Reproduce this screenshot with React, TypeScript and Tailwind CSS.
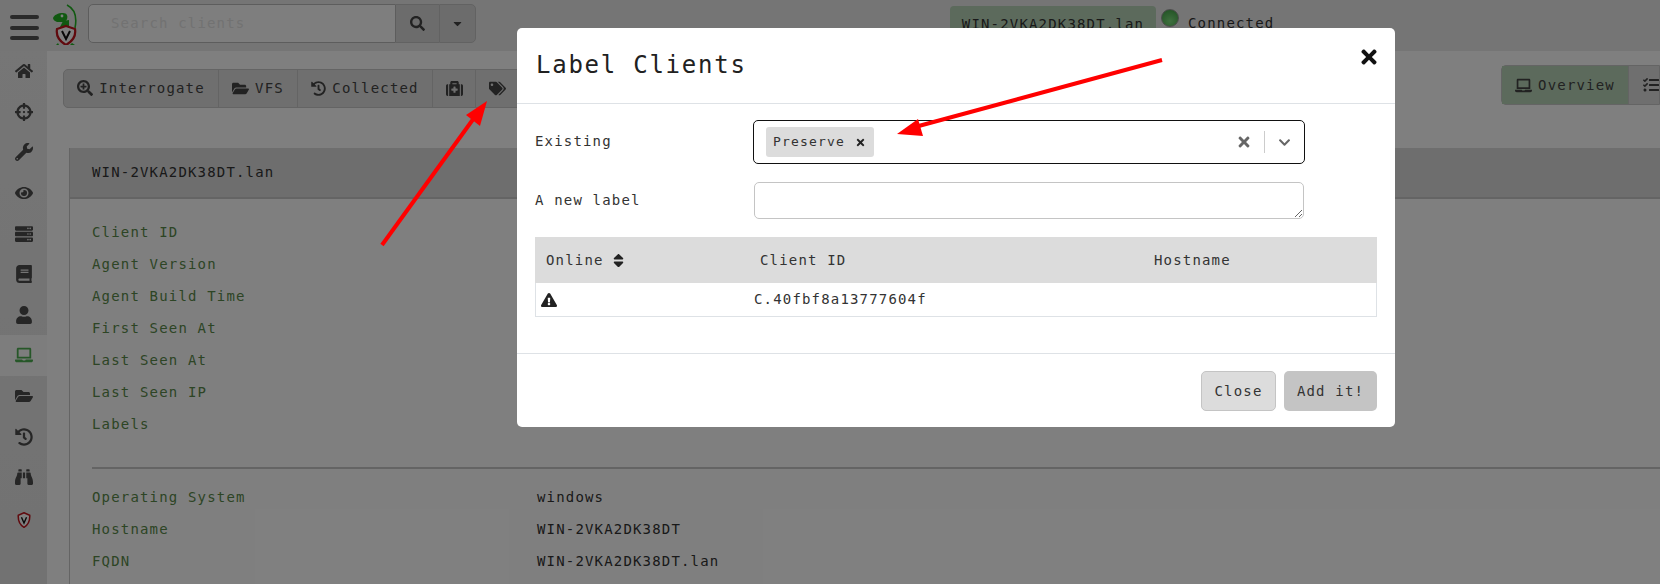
import {
  FaBinoculars,
  FaBook,
  FaCaretDown,
  FaChevronDown,
  FaCrosshairs,
  FaExclamationTriangle,
  FaEye,
  FaFolderOpen,
  FaHistory,
  FaHome,
  FaLaptop,
  FaMedkit,
  FaSearch,
  FaSearchPlus,
  FaServer,
  FaSort,
  FaTags,
  FaTasks,
  FaTimes,
  FaUser,
  FaWrench,
} from "react-icons/fa";

function Shield({ size = 22 }: { size?: number }) {
  return (
    <svg width={size} height={size * 1.15} viewBox="0 0 22 25">
      <path d="M11 1 L20 5 C20.5 13 18 20 11 24 C4 20 1.5 13 2 5 Z" fill="#fff" stroke="#c0141c" strokeWidth="2.4" />
      <path d="M7 8 L11 17 L15 8" fill="none" stroke="#111" strokeWidth="2.2" />
    </svg>
  );
}

function Logo() {
  return (
    <svg width="27" height="41" viewBox="0 0 27 41" className="shrink-0">
      <path d="M15 1 C23 5 25 14 23 24" fill="none" stroke="#22b322" strokeWidth="1.6" />
      <path d="M1 14 C2 11 6 9 11 9 C15 9 16 12 15 15 C14 18 11 18 9 18 L5 18 C3 17 1 16 1 14 Z" fill="#22b322" />
      <path d="M11 17 L17 16 L17 23 L8 23 Z" fill="#22b322" />
      <circle cx="10" cy="12" r="1.4" fill="#fff" />
      <path d="M2 43 L6 39 L8 43 Z M20 39 L26 43 L16 43 Z" fill="#22b322" />
      <path d="M14 22 L23 25 C24 31 21 37 14 41 C7 37 4 31 5 25 Z" fill="#fff" stroke="#c0141c" strokeWidth="2.2" />
      <path d="M10 27 L14 35 L18 27" fill="none" stroke="#111" strokeWidth="2" />
    </svg>
  );
}

const navIcons = [
  FaHome,
  FaCrosshairs,
  FaWrench,
  FaEye,
  FaServer,
  FaBook,
  FaUser,
  FaLaptop,
  FaFolderOpen,
  FaHistory,
  FaBinoculars,
];

const detailLabels = ["Client ID", "Agent Version", "Agent Build Time", "First Seen At", "Last Seen At", "Last Seen IP", "Labels"];

const systemRows = [
  ["Operating System", "windows"],
  ["Hostname", "WIN-2VKA2DK38DT"],
  ["FQDN", "WIN-2VKA2DK38DT.lan"],
];

function TopBar() {
  return (
    <div className="flex h-[51px] shrink-0 items-start bg-[#eaeaea]">
      <div className="ml-[10px] mt-[15px] flex w-[29px] flex-col gap-[6.5px]">
        <div className="h-[4px] rounded-full bg-[#555]" />
        <div className="h-[4px] rounded-full bg-[#555]" />
        <div className="h-[4px] rounded-full bg-[#555]" />
      </div>
      <div className="ml-[13px] mt-[4px]">
        <Logo />
      </div>
      <div className="ml-[9px] mt-[4px] flex h-[39px] w-[388px]">
        <div className="flex w-[308px] items-center rounded-l-[5px] border border-[#bbb] bg-[#fdfdfd] pl-[22px] text-[#e4e4e4]">
          Search clients
        </div>
        <div className="flex w-[43px] items-center justify-center border-y border-[#c4c4c4] bg-[#d8d8d8] text-[#444]">
          <FaSearch size={15} />
        </div>
        <div className="flex w-[37px] items-center justify-center rounded-r-[5px] border border-[#c4c4c4] bg-[#d8d8d8] text-[#444]">
          <FaCaretDown size={13} />
        </div>
      </div>
      <div className="ml-[474px] mt-[6px] flex h-[36px] w-[206px] items-center justify-center rounded-[4px] bg-[#b8d4b8] text-[#333]">
        WIN-2VKA2DK38DT.lan
      </div>
      <div className="ml-[5px] mt-[9px] h-[18px] w-[18px] rounded-full border border-[#999] bg-[radial-gradient(circle_at_50%_70%,#7ee07e,#3f9f45)]" />
      <div className="ml-[9px] mt-[13px] text-[#333]">Connected</div>
    </div>
  );
}

function Sidebar() {
  return (
    <div className="h-full w-[47px] shrink-0 bg-gradient-to-b from-[#ececec] to-[#e4e4e4]">
      {navIcons.map((Icon, i) => (
        <div
          key={i}
          className={
            i === 7
              ? "flex h-[40.6px] items-center justify-center bg-[#fafafa] text-[#4caf50]"
              : "flex h-[40.6px] items-center justify-center text-[#4c4c4c]"
          }
        >
          <Icon size={18} />
        </div>
      ))}
      <div className="mt-[2px] flex h-[41px] items-center justify-center">
        <Shield size={14} />
      </div>
    </div>
  );
}

function ToolButton({ icon, label, className }: { icon: React.ReactNode; label?: string; className: string }) {
  return (
    <div className={`flex h-full items-center gap-[6px] border-r border-[#c8c8c8] pb-[1px] text-[#444] ${className}`}>
      {icon}
      {label && <span>{label}</span>}
    </div>
  );
}

function Toolbar() {
  return (
    <div className="mt-[18px] ml-[16px] flex h-[39px] items-start justify-between">
      <div className="flex h-full rounded-[5px] border border-[#c8c8c8] bg-[#dedede]">
        <ToolButton className="w-[155px] justify-center" icon={<FaSearchPlus size={16} />} label="Interrogate" />
        <ToolButton className="w-[79px] justify-center" icon={<FaFolderOpen size={17} />} label="VFS" />
        <ToolButton className="w-[135px] justify-center" icon={<FaHistory size={15} />} label="Collected" />
        <ToolButton className="w-[43px] justify-center" icon={<FaMedkit size={17} />} />
        <ToolButton className="w-[60px] pl-[13px]" icon={<FaTags size={17} />} />
      </div>
      <div className="-mt-[4px] flex h-[40px] w-[159px] rounded-l-[5px] border border-[#c8c8c8] bg-[#dedede]">
        <div className="flex w-[129px] items-center justify-center gap-[6px] border-r border-[#c8c8c8] bg-[#b8d4b8] text-[#444]">
          <FaLaptop size={17} />
          <span>Overview</span>
        </div>
        <div className="flex flex-1 items-center pl-[14px] text-[#444]">
          <FaTasks size={16} />
        </div>
      </div>
    </div>
  );
}

function ClientPanel() {
  return (
    <div className="mt-[40px] ml-[22px] h-[600px] border-l border-[#c8c8c8]">
      <div className="flex h-[51px] items-center border-b-2 border-[#c8c8c8] bg-[#dcdcdc] pl-[22px] pb-[1px] text-[#333]">
        WIN-2VKA2DK38DT.lan
      </div>
      <div className="pl-[22px] pt-[17px]">
        {detailLabels.map((label) => (
          <div key={label} className="flex h-[32px] items-center text-[#5a8a4a]">
            {label}
          </div>
        ))}
        <div className="mb-[12px] mt-[27px] h-[2px] bg-[#c8c8c8]" />
        {systemRows.map(([label, value]) => (
          <div key={label} className="flex h-[32px] items-center">
            <div className="w-[445px] text-[#5a8a4a]">{label}</div>
            <div className="text-[#333]">{value}</div>
          </div>
        ))}
      </div>
    </div>
  );
}

function LabelModal() {
  return (
    <div className="absolute left-[517px] top-[28px] w-[878px] rounded-[5px] bg-white text-[#333]">
      <div className="relative flex h-[76px] items-center border-b border-[#dee2e6] pl-[19px] pb-[2px] text-[24px] tracking-[1.75px] text-[#212121]">
        Label Clients
        <FaTimes size={22} className="absolute right-[15px] top-[18px] text-[#111]" />
      </div>
      <div className="px-[18px] pt-[16px]">
        <div className="flex items-center">
          <div className="w-[218px] pb-[1px]">Existing</div>
          <div className="flex h-[44px] w-[552px] items-center rounded-[5px] border-[1.4px] border-[#111] pl-[12px]">
            <div className="flex h-[30px] w-[108px] items-center rounded-[3px] bg-[#dcdcdc] pl-[7px] text-[13px]">
              Preserve
              <FaTimes size={11} className="ml-[10px] text-[#222]" />
            </div>
            <FaTimes size={16} className="ml-auto text-[#666]" />
            <div className="ml-[12px] h-[22px] w-px bg-[#ccc]" />
            <FaChevronDown size={13} className="ml-[13px] mr-[13px] text-[#666]" />
          </div>
        </div>
        <div className="mt-[18px] flex items-center">
          <div className="w-[219px]">A new label</div>
          <textarea className="h-[37px] w-[550px] rounded-[5px] border border-[#c4c4c4] bg-white" />
        </div>
        <div className="mt-[18px] w-[842px]">
          <div className="grid h-[46px] grid-cols-[213px_394px_235px] items-center bg-[#dcdcdc]">
            <div className="flex items-center gap-[6px] pl-[11px]">
              Online <FaSort size={17} className="text-[#222]" />
            </div>
            <div className="pl-[12px]">Client ID</div>
            <div className="pl-[12px]">Hostname</div>
          </div>
          <div className="grid h-[34px] grid-cols-[213px_394px_235px] items-center border-x border-b border-[#dee2e6]">
            <div className="pl-[5px]">
              <FaExclamationTriangle size={16} className="text-[#222]" />
            </div>
            <div className="pl-[5px]">C.40fbf8a13777604f</div>
            <div />
          </div>
        </div>
      </div>
      <div className="mt-[36px] flex h-[74px] items-start justify-end gap-[8px] border-t border-[#dee2e6] pr-[18px] pt-[17px]">
        <div className="flex h-[40px] w-[75px] items-center justify-center rounded-[5px] border border-[#c4c4c4] bg-[#dcdcdc]">
          Close
        </div>
        <div className="flex h-[40px] w-[93px] items-center justify-center rounded-[5px] bg-[#c4c4c4]">
          Add it!
        </div>
      </div>
    </div>
  );
}

function Arrows() {
  return (
    <svg className="pointer-events-none absolute inset-0" width="1660" height="584">
      <line x1="382" y1="245" x2="474" y2="118" stroke="#ff0000" strokeWidth="4" />
      <polygon points="487,101 480,126 466,115" fill="#ff0000" />
      <line x1="1162" y1="60" x2="915" y2="127" stroke="#ff0000" strokeWidth="4" />
      <polygon points="897,134 918,119 923,136" fill="#ff0000" />
    </svg>
  );
}

export default function App() {
  return (
    <div className="relative h-[584px] w-[1660px] overflow-hidden bg-white font-['DejaVu_Sans_Mono',monospace] text-[14px] tracking-[1.17px]">
      <TopBar />
      <div className="flex h-[533px]">
        <Sidebar />
        <div className="min-w-0 flex-1">
          <Toolbar />
          <ClientPanel />
        </div>
      </div>
      <div className="absolute inset-0 bg-black/50" />
      <LabelModal />
      <Arrows />
    </div>
  );
}
